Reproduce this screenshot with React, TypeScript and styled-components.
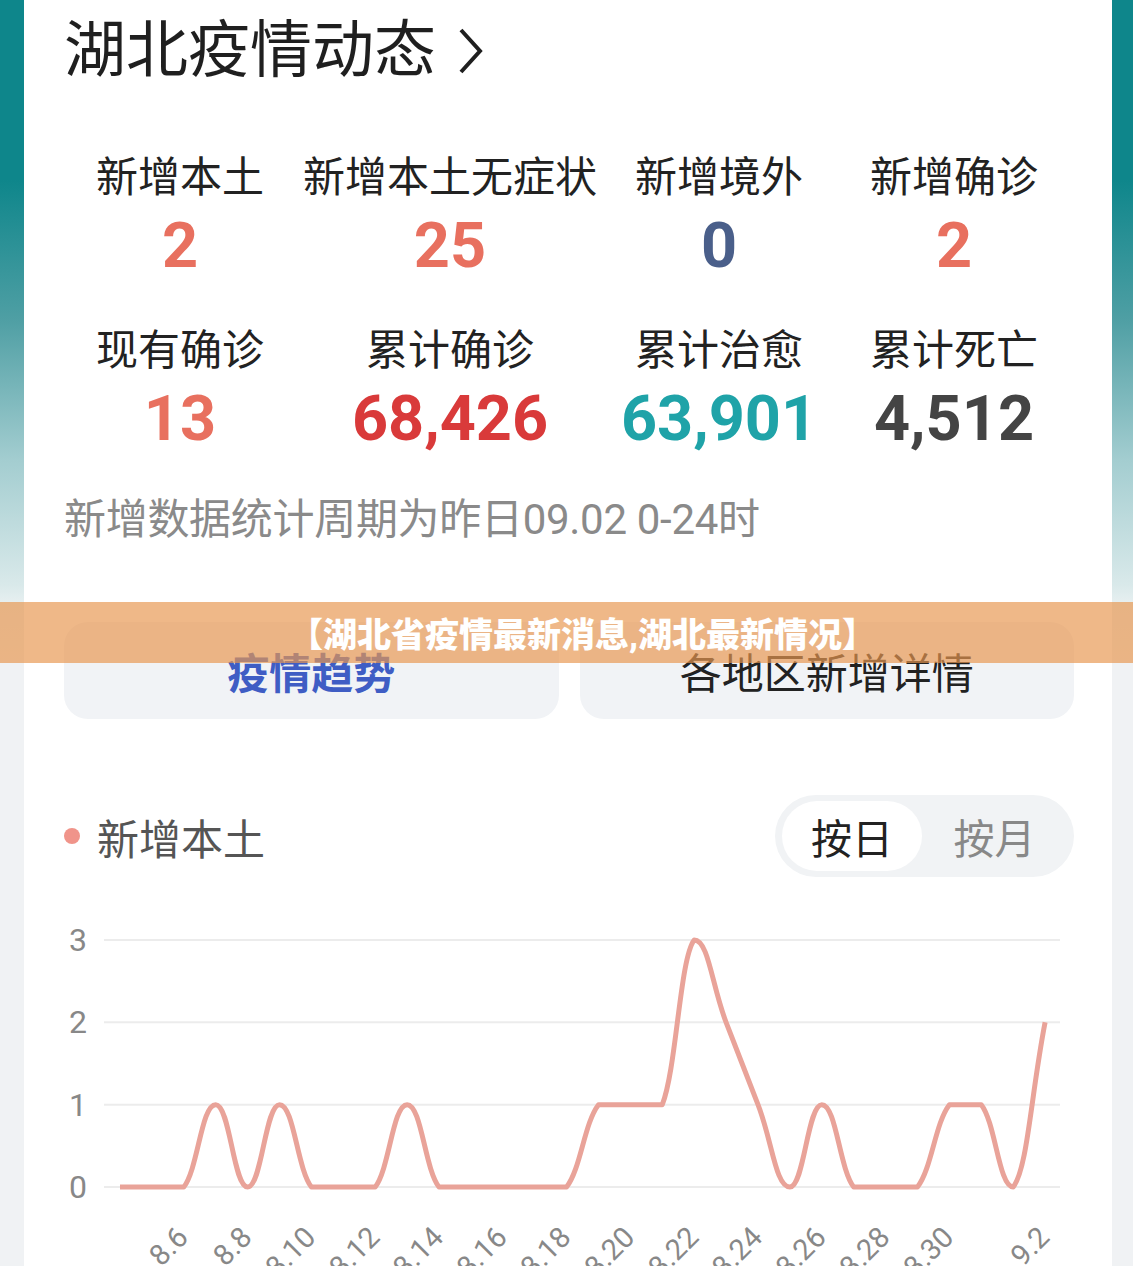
import React, { useState } from 'react';
import styled, { createGlobalStyle } from 'styled-components';

const GlobalStyle = createGlobalStyle`
  html, body {
    margin: 0;
    padding: 0;
  }
  body {
    font-family: Roboto, "Noto Sans CJK SC", sans-serif;
  }
  * {
    box-sizing: border-box;
  }
`;

const Page = styled.div`
  position: relative;
  height: 100vh;
  overflow: hidden;
  padding: 0 21px 0 24px;
  background: linear-gradient(
    to bottom,
    #0e868b 0px,
    #0e868b 180px,
    #4f9fa4 320px,
    #a3cdd0 460px,
    #d9e9ea 585px,
    #e6eff0 602px,
    #f0f2f4 664px,
    #f0f2f4 100%
  );
`;

const Card = styled.div`
  background: #fff;
  min-height: 100%;
  padding: 20px 38px 0 40px;
`;

const TitleRow = styled.div`
  display: flex;
  align-items: center;
  gap: 22px;
  font-size: 62px;
  line-height: 62px;
  color: #1f1f1f;
`;

const StatsGrid = styled.div`
  margin-top: 72px;
  display: grid;
  grid-template-columns: 232px 308px 230px 240px;
  row-gap: 49px;
`;

const Stat = styled.div`
  display: flex;
  flex-direction: column;
  align-items: center;
  gap: 12px;
`;

const StatLabel = styled.div`
  font-size: 42px;
  line-height: 48px;
  color: #222;
  white-space: nowrap;
`;

const StatValue = styled.div<{ $color: string }>`
  font-family: Roboto, sans-serif;
  font-weight: 700;
  font-size: 63px;
  line-height: 64px;
  color: ${(p) => p.$color};
`;

const Footnote = styled.div`
  margin-top: 44px;
  font-size: 42px;
  line-height: 50px;
  letter-spacing: -0.3px;
  color: #8a8a8a;
`;

const Tabs = styled.div`
  margin-top: 77px;
  display: grid;
  grid-template-columns: 1fr 1fr;
  gap: 21px;
`;

const Tab = styled.div<{ $active?: boolean }>`
  height: 97px;
  border-radius: 24px;
  background: #f1f3f6;
  display: flex;
  align-items: center;
  justify-content: center;
  font-size: 42px;
  font-weight: ${(p) => (p.$active ? 700 : 400)};
  color: ${(p) => (p.$active ? '#3f5dc4' : '#222')};
`;

const ChartHeader = styled.div`
  margin-top: 76px;
  height: 82px;
  display: flex;
  align-items: center;
  justify-content: space-between;
`;

const Legend = styled.div`
  display: flex;
  align-items: center;
  gap: 17px;
  font-size: 42px;
  color: #555;
`;

const Dot = styled.span`
  width: 16px;
  height: 16px;
  border-radius: 50%;
  background: #f0948a;
`;

const Toggle = styled.div`
  display: grid;
  grid-template-columns: 140px 145px;
  height: 82px;
  padding: 6px 7px;
  border-radius: 41px;
  background: #f1f3f5;
`;

const ToggleItem = styled.div<{ $active?: boolean }>`
  border-radius: 35px;
  display: flex;
  align-items: center;
  justify-content: center;
  font-size: 41px;
  cursor: pointer;
  background: ${(p) => (p.$active ? '#fff' : 'transparent')};
  color: ${(p) => (p.$active ? '#222' : '#888')};
`;

const ChartSvg = styled.svg`
  display: block;
  margin-top: 12px;
  overflow: visible;
`;

const Banner = styled.div`
  position: absolute;
  left: 0;
  right: 0;
  top: 602px;
  height: 61px;
  padding-left: 32px;
  background: rgba(232, 150, 80, 0.68);
  display: flex;
  align-items: center;
  justify-content: center;
  color: #fff;
  font-size: 34px;
  font-weight: 900;
`;

const stats = [
  { label: '新增本土', value: '2', color: '#e8705f' },
  { label: '新增本土无症状', value: '25', color: '#e8705f' },
  { label: '新增境外', value: '0', color: '#4a5f8a' },
  { label: '新增确诊', value: '2', color: '#e8705f' },
  { label: '现有确诊', value: '13', color: '#e8705f' },
  { label: '累计确诊', value: '68,426', color: '#d93a3a' },
  { label: '累计治愈', value: '63,901', color: '#1fa3a8' },
  { label: '累计死亡', value: '4,512', color: '#444' },
];

const values = [0, 0, 0, 1, 0, 1, 0, 0, 0, 1, 0, 0, 0, 0, 0, 1, 1, 1, 3, 2, 1, 0, 1, 0, 0, 0, 1, 1, 0, 2];

// chart coordinates are page pixels, shifted by the svg's origin
const OX = 64;
const OY = 890;
const xAt = (i: number) => 120 + i * 31.9 - OX;
const yAt = (v: number) => 1188 - v * 82.33 - OY;

const dateOf = (i: number) => (i < 28 ? `8.${i + 4}` : `9.${i - 27}`);

// smooth line, control points kept between neighbours (like echarts smooth)
const smoothPath = (pts: [number, number][], smooth = 0.45) => {
  const n = pts.length;
  const clamp = (v: number, a: number, b: number) => Math.max(Math.min(a, b), Math.min(Math.max(a, b), v));
  const cps = pts.map((p, i) => {
    const prev = pts[Math.max(i - 1, 0)];
    const next = pts[Math.min(i + 1, n - 1)];
    const dx = next[0] - prev[0];
    const dy = next[1] - prev[1];
    const lp = p[0] - prev[0];
    const ln = next[0] - p[0];
    const tot = lp + ln || 1;
    const inCp: [number, number] = [p[0] - dx * smooth * (lp / tot), clamp(p[1] - dy * smooth * (lp / tot), prev[1], p[1])];
    const outCp: [number, number] = [p[0] + dx * smooth * (ln / tot), clamp(p[1] + dy * smooth * (ln / tot), p[1], next[1])];
    return { inCp, outCp };
  });
  let d = `M${pts[0][0]},${pts[0][1]}`;
  for (let i = 0; i < n - 1; i++) {
    const a = cps[i].outCp;
    const b = cps[i + 1].inCp;
    d += ` C${a[0]},${a[1]} ${b[0]},${b[1]} ${pts[i + 1][0]},${pts[i + 1][1]}`;
  }
  return d;
};

const Chart: React.FC = () => {
  const pts = values.map((v, i) => [xAt(i), yAt(v)] as [number, number]);
  const ticks = values.map((_, i) => i).filter((i) => (i >= 2 && i <= 26 && i % 2 === 0) || i === 29);

  return (
    <ChartSvg width={1010} height={420} viewBox="0 0 1010 420">
      {[0, 1, 2, 3].map((v) => (
        <g key={v}>
          <line x1={104 - OX} x2={1060 - OX} y1={yAt(v)} y2={yAt(v)} stroke="#ececec" strokeWidth={2} />
          <text x={78 - OX} y={yAt(v) + 11} textAnchor="middle" fontSize={32} fill="#888" fontFamily="Roboto, sans-serif">
            {v}
          </text>
        </g>
      ))}
      <path d={smoothPath(pts)} fill="none" stroke="#e9a399" strokeWidth={5} strokeLinejoin="round" />
      {ticks.map((i) => {
        const x = xAt(i) + 6;
        const y = 1240 - OY;
        return (
          <text
            key={i}
            x={x}
            y={y}
            textAnchor="end"
            fontSize={29}
            fill="#888"
            fontFamily="Roboto, sans-serif"
            transform={`rotate(-45 ${x} ${y})`}
          >
            {dateOf(i)}
          </text>
        );
      })}
    </ChartSvg>
  );
};

const App: React.FC = () => {
  const [mode, setMode] = useState<'day' | 'month'>('day');

  return (
    <>
      <GlobalStyle />
      <Page>
        <Card>
          <TitleRow>
            湖北疫情动态
            <svg width="26" height="46" viewBox="0 0 26 46">
              <polyline points="3,2 22,23 3,44" fill="none" stroke="#1f1f1f" strokeWidth="4" />
            </svg>
          </TitleRow>

          <StatsGrid>
            {stats.map((s) => (
              <Stat key={s.label}>
                <StatLabel>{s.label}</StatLabel>
                <StatValue $color={s.color}>{s.value}</StatValue>
              </Stat>
            ))}
          </StatsGrid>

          <Footnote>新增数据统计周期为昨日09.02 0-24时</Footnote>

          <Tabs>
            <Tab $active>疫情趋势</Tab>
            <Tab>各地区新增详情</Tab>
          </Tabs>

          <ChartHeader>
            <Legend>
              <Dot />
              新增本土
            </Legend>
            <Toggle>
              <ToggleItem $active={mode === 'day'} onClick={() => setMode('day')}>按日</ToggleItem>
              <ToggleItem $active={mode === 'month'} onClick={() => setMode('month')}>按月</ToggleItem>
            </Toggle>
          </ChartHeader>

          <Chart />
        </Card>

        {/* 标题横幅，盖在内容上面 */}
        <Banner>【湖北省疫情最新消息,湖北最新情况】</Banner>
      </Page>
    </>
  );
};

export default App;
